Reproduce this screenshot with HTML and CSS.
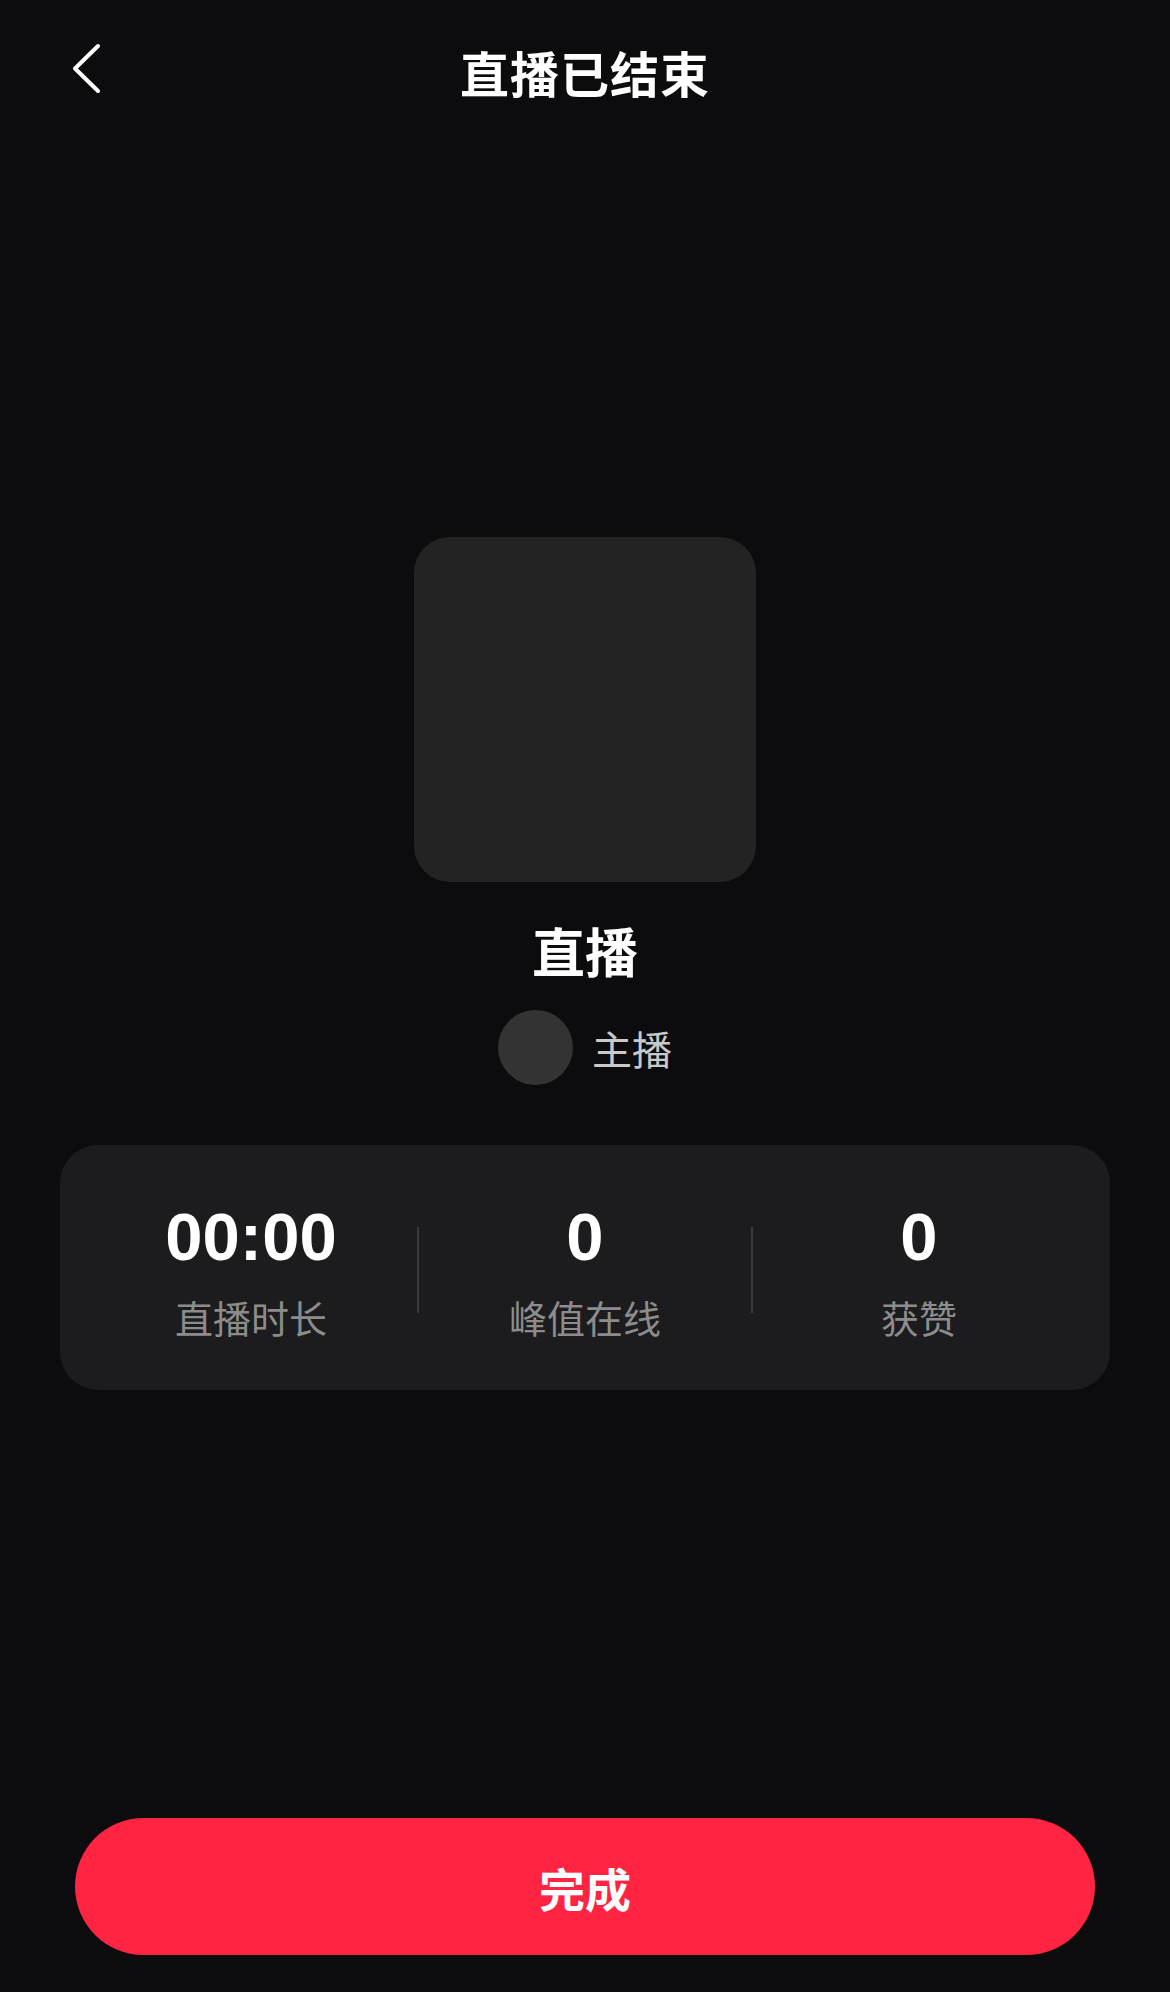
FILE: index.html
```html
<!DOCTYPE html>
<html lang="zh-CN">

<head>
    <meta charset="UTF-8">
    <meta name="viewport" content="width=device-width, initial-scale=1.0">
    <title>直播已结束</title>
    <link rel="stylesheet" href="styles.css">
</head>

<body>
    <div class="page">
        <!-- 顶部栏 -->
        <header class="top-bar">
            <a href="#" class="back-btn">
                <svg width="32" height="52" viewBox="0 0 32 52">
                    <polyline points="26,3 3,25.5 26,48" fill="none" stroke="#fff" stroke-width="4"
                        stroke-linecap="round" stroke-linejoin="round" />
                </svg>
            </a>
            <h1>直播已结束</h1>
        </header>

        <!-- 直播信息 -->
        <main class="summary">
            <div class="cover"></div>
            <h2 class="live-title">直播</h2>
            <div class="host">
                <div class="avatar"></div>
                <span class="host-name">主播</span>
            </div>

            <!-- 数据统计 -->
            <div class="stats">
                <div class="stat">
                    <div class="stat-value">00:00</div>
                    <div class="stat-label">直播时长</div>
                </div>
                <div class="stat">
                    <div class="stat-value">0</div>
                    <div class="stat-label">峰值在线</div>
                </div>
                <div class="stat">
                    <div class="stat-value">0</div>
                    <div class="stat-label">获赞</div>
                </div>
            </div>
        </main>

        <button class="done-btn">完成</button>
    </div>
</body>

</html>
```

FILE: styles.css
```css
/* 基本样式 */
body {
    margin: 0;
    background-color: #0c0c0e;
    color: #fff;
    font-family: "Liberation Sans", "Noto Sans CJK SC", sans-serif;
}

.page {
    min-height: 100vh;
    display: flex;
    flex-direction: column;
    align-items: center;
    padding-bottom: 37px;
    box-sizing: border-box;
}

/* 顶部栏 */
.top-bar {
    position: relative;
    width: 100%;
    height: 140px;
    display: flex;
    align-items: center;
    justify-content: center;
}

.top-bar h1 {
    margin: 0;
    padding-top: 2px;
    font-size: 49px;
    font-weight: 700;
    letter-spacing: 1px;
}

.back-btn {
    position: absolute;
    left: 72px;
    top: 43px;
    display: block;
}

.back-btn svg {
    display: block;
}

/* 直播信息 */
.summary {
    display: flex;
    flex-direction: column;
    align-items: center;
    width: 100%;
}

.cover {
    width: 342px;
    height: 345px;
    margin-top: 397px;
    background-color: #232323;
    border-radius: 36px;
}

.live-title {
    margin: 36px 0 0;
    font-size: 53px;
    line-height: 73px;
    font-weight: 700;
}

.host {
    display: flex;
    align-items: center;
    gap: 19px;
    margin-top: 19px;
}

.avatar {
    width: 75px;
    height: 75px;
    border-radius: 50%;
    background-color: #333;
}

.host-name {
    font-size: 40px;
    color: #c9c9c9;
}

/* 数据统计 */
.stats {
    display: grid;
    grid-template-columns: repeat(3, 1fr);
    align-items: center;
    width: 1050px;
    height: 245px;
    margin-top: 60px;
    padding: 6px 24px 0;
    box-sizing: border-box;
    background-color: #1c1c1e;
    border-radius: 38px;
}

.stat {
    position: relative;
    text-align: center;
}

.stat + .stat::before {
    content: "";
    position: absolute;
    left: -1px;
    top: 30px;
    width: 2px;
    height: 86px;
    background-color: #3a3a3c;
}

.stat-value {
    font-size: 67px;
    line-height: 79px;
    font-weight: 700;
}

.stat-label {
    margin-top: 20px;
    font-size: 38px;
    line-height: 49px;
    color: #8c8c8c;
}

/* 完成按钮 */
.done-btn {
    margin-top: auto;
    width: 1020px;
    height: 137px;
    border: none;
    border-radius: 69px;
    background-color: #ff2442;
    color: #fff;
    font-family: "Noto Sans CJK SC", sans-serif;
    font-size: 46px;
    font-weight: 700;
    cursor: pointer;
}
```
